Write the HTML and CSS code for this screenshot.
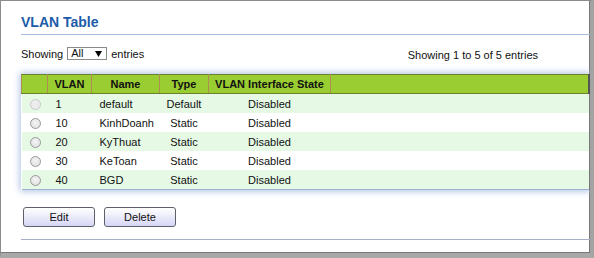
FILE: index.html
```html
<!DOCTYPE html>
<html>
<head>
<meta charset="utf-8">
<link rel="stylesheet" href="styles.css">
</head>
<body>
<div class="frame">
  <div class="content">
    <h1 class="title">VLAN Table</h1>
    <div class="toolbar">
      <div class="show-left">
        <span>Showing</span>
        <span class="select"><span>All</span><svg class="arrow" width="7" height="6" viewBox="0 0 7 6"><path d="M0 0H7L3.5 6Z" fill="#000"/></svg></span>
        <span>entries</span>
      </div>
      <div class="show-right">Showing 1 to 5 of 5 entries</div>
    </div>
    <table class="grid">
      <colgroup>
        <col class="c-radio"><col class="c-vlan"><col class="c-name"><col class="c-type"><col class="c-state"><col>
      </colgroup>
      <thead>
        <tr><th></th><th>VLAN</th><th>Name</th><th>Type</th><th>VLAN Interface State</th><th></th></tr>
      </thead>
      <tbody>
        <tr class="odd"><td><span class="radio disabled"></span></td><td class="l">1</td><td class="l">default</td><td>Default</td><td>Disabled</td><td></td></tr>
        <tr><td><span class="radio"></span></td><td class="l">10</td><td class="l">KinhDoanh</td><td>Static</td><td>Disabled</td><td></td></tr>
        <tr class="odd"><td><span class="radio"></span></td><td class="l">20</td><td class="l">KyThuat</td><td>Static</td><td>Disabled</td><td></td></tr>
        <tr><td><span class="radio"></span></td><td class="l">30</td><td class="l">KeToan</td><td>Static</td><td>Disabled</td><td></td></tr>
        <tr class="odd"><td><span class="radio"></span></td><td class="l">40</td><td class="l">BGD</td><td>Static</td><td>Disabled</td><td></td></tr>
      </tbody>
    </table>
    <div class="buttons">
      <button class="btn">Edit</button>
      <button class="btn">Delete</button>
    </div>
    <div class="rule"></div>
  </div>
</div>
</body>
</html>
```
FILE: styles.css
```css
html, body {
  margin: 0;
  padding: 0;
  background: #fff;
}
body {
  font-family: "Liberation Sans", Arial, sans-serif;
  font-size: 11px;
  color: #111;
}
.frame {
  width: 594px;
  height: 258px;
  box-sizing: border-box;
  border-top: 1px solid #8c8c8c;
  border-left: 1px solid #8c8c8c;
  border-right: 4px solid #a3a3a3;
  border-bottom: 5px solid #a8a8a8;
  box-shadow: inset -1px -1px 0 #777;
  background: #fff;
  overflow: hidden;
}
.content {
  padding: 13px 0 0 20px;
}
.title {
  margin: 0;
  font-size: 14px;
  line-height: 16px;
  font-weight: bold;
  color: #1c5ca8;
  padding-bottom: 4px;
  border-bottom: 1px solid #a9bbe0;
}
.toolbar {
  display: flex;
  justify-content: space-between;
  align-items: center;
  margin-top: 12px;
  height: 13px;
}
.show-left {
  display: flex;
  align-items: center;
  gap: 4px;
}
.select {
  display: inline-flex;
  align-items: center;
  justify-content: space-between;
  box-sizing: border-box;
  width: 40px;
  height: 13px;
  border: 1px solid #8a8a8a;
  padding: 0 4px 0 3px;
  line-height: 11px;
}
.arrow {
  display: block;
}
.show-right {
  margin-right: 52px;
  padding-top: 2px;
}
.grid {
  margin-top: 14px;
  width: 569px;
  border-collapse: collapse;
  table-layout: fixed;
  box-shadow: 0 0 7px 1px #a9bfe2;
  border-bottom: 1px solid #9db3d3;
}
.c-radio { width: 26px; }
.c-vlan { width: 44px; }
.c-name { width: 68px; }
.c-type { width: 49px; }
.c-state { width: 122px; }
.grid th {
  background: #9acd32;
  height: 18px;
  padding: 0;
  font-weight: bold;
  font-size: 11px;
  color: #111;
  text-align: center;
  border-top: 1px solid #6e7f2c;
  border-bottom: 1px solid #6e7f2c;
  border-left: 1px solid #b08c55;
  border-right: 1px solid #b08c55;
}
.grid th:last-child {
  border-right: 2px solid #555;
}
.grid td {
  height: 19px;
  padding: 0;
  text-align: center;
  white-space: nowrap;
}
.grid td.l {
  text-align: left;
  padding-left: 8px;
}
.grid tr.odd td {
  background: #e5f9e5;
}
.radio {
  display: inline-block;
  vertical-align: middle;
  box-sizing: border-box;
  width: 11px;
  height: 11px;
  border-radius: 50%;
  border: 1px solid #9a9a9a;
  background: radial-gradient(circle at 50% 40%, #f4f4f4 0%, #dcdcdc 100%);
  margin-left: 1px;
}
.radio.disabled {
  border-color: #c8c8c8;
  background: #ececec;
}
.buttons {
  display: flex;
  gap: 9px;
  margin-top: 17px;
  padding-left: 2px;
}
.btn {
  width: 72px;
  height: 20px;
  box-sizing: border-box;
  border: 1px solid #5f5f6a;
  border-radius: 3px;
  background: linear-gradient(#ffffff, #d6d6f6);
  font-family: "Liberation Sans", Arial, sans-serif;
  font-size: 11px;
  color: #111;
  padding: 0;
}
.rule {
  margin-top: 12px;
  border-top: 1px solid #a9b0c8;
}
```
